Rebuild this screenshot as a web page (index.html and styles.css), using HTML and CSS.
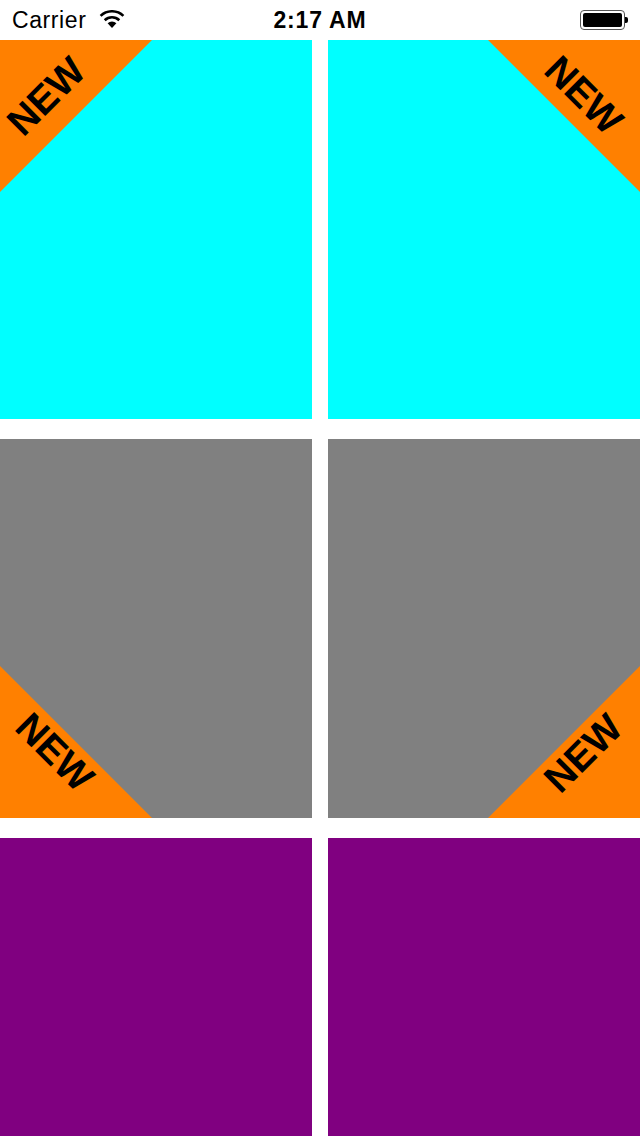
FILE: index.html
```html
<!DOCTYPE html>
<html lang="en">
<head>
    <meta charset="UTF-8">
    <meta name="viewport" content="width=device-width, initial-scale=1.0">
    <title>Tiles</title>
    <link rel="stylesheet" href="styles.css">
</head>
<body>

    <div class="status-bar">
        <div class="status-left">
            <span class="carrier">Carrier</span>
            <svg class="wifi" width="26" height="18" viewBox="0 0 26 18">
                <path d="M13 18 L8.6 13.2 A6.4 6.4 0 0 1 17.4 13.2 Z" fill="#000"/>
                <path d="M5.7 10.2 A10.6 10.6 0 0 1 20.3 10.2" fill="none" stroke="#000" stroke-width="2.6"/>
                <path d="M1.6 5.9 A16.4 16.4 0 0 1 24.4 5.9" fill="none" stroke="#000" stroke-width="2.6"/>
            </svg>
        </div>
        <div class="time">2:17 AM</div>
        <div class="status-right">
            <div class="battery"><div class="battery-fill"></div></div>
            <div class="battery-nub"></div>
        </div>
    </div>

    <div class="grid">
        <div class="tile cyan">
            <div class="corner top-left"></div>
            <span class="badge-text tl">NEW</span>
        </div>
        <div class="tile cyan">
            <div class="corner top-right"></div>
            <span class="badge-text tr">NEW</span>
        </div>
        <div class="tile gray">
            <div class="corner bottom-left"></div>
            <span class="badge-text bl">NEW</span>
        </div>
        <div class="tile gray">
            <div class="corner bottom-right"></div>
            <span class="badge-text br">NEW</span>
        </div>
        <div class="tile purple"></div>
        <div class="tile purple"></div>
    </div>

</body>
</html>
```

FILE: styles.css
```css
body {
    margin: 0;
    background-color: #fff;
    font-family: "Liberation Sans", Arial, sans-serif;
    width: 640px;
    height: 1136px;
    overflow: hidden;
}

/* status bar */
.status-bar {
    height: 40px;
    display: flex;
    align-items: center;
    justify-content: space-between;
    padding: 0 12px 0 12px;
    box-sizing: border-box;
    position: relative;
}

.status-left {
    display: flex;
    align-items: center;
    gap: 13px;
}

.carrier {
    font-size: 23px;
    color: #000;
    letter-spacing: 0.6px;
}

.wifi {
    margin-top: -2px;
}

.time {
    position: absolute;
    left: 0;
    right: 0;
    text-align: center;
    font-size: 23px;
    font-weight: bold;
    letter-spacing: 0.8px;
    pointer-events: none;
}

.status-right {
    display: flex;
    align-items: center;
}

.battery {
    width: 45px;
    height: 20px;
    box-sizing: border-box;
    border: 1px solid #555;
    border-radius: 4px;
    padding: 2px;
}

.battery-fill {
    width: 100%;
    height: 100%;
    background-color: #000;
    border-radius: 2px;
}

.battery-nub {
    width: 3px;
    height: 6px;
    background-color: #000;
    border-radius: 0 2px 2px 0;
}

/* tiles */
.grid {
    display: grid;
    grid-template-columns: 312px 312px;
    grid-template-rows: 379px 379px 1fr;
    height: 1096px;
    column-gap: 16px;
    row-gap: 20px;
}

.tile {
    position: relative;
    overflow: hidden;
}

.cyan { background-color: #00ffff; }
.gray { background-color: #808080; }
.purple { background-color: #800080; }

.corner {
    position: absolute;
    width: 152px;
    height: 152px;
    background-color: #ff8000;
}

.top-left {
    top: 0;
    left: 0;
    clip-path: polygon(0 0, 100% 0, 0 100%);
}

.top-right {
    top: 0;
    right: 0;
    clip-path: polygon(0 0, 100% 0, 100% 100%);
}

.bottom-left {
    bottom: 0;
    left: 0;
    clip-path: polygon(0 0, 100% 100%, 0 100%);
}

.bottom-right {
    bottom: 0;
    right: 0;
    clip-path: polygon(100% 0, 100% 100%, 0 100%);
}

.badge-text {
    position: absolute;
    font-size: 39px;
    font-weight: bold;
    line-height: 1;
    color: #000;
    white-space: nowrap;
}

.tl {
    left: 46px;
    top: 56px;
    transform: translate(-50%, -50%) rotate(-45deg);
}

.tr {
    right: 56px;
    top: 55px;
    transform: translate(50%, -50%) rotate(45deg);
}

.bl {
    left: 55px;
    bottom: 66px;
    transform: translate(-50%, 50%) rotate(45deg);
}

.br {
    right: 57px;
    bottom: 65px;
    transform: translate(50%, 50%) rotate(-45deg);
}
```
